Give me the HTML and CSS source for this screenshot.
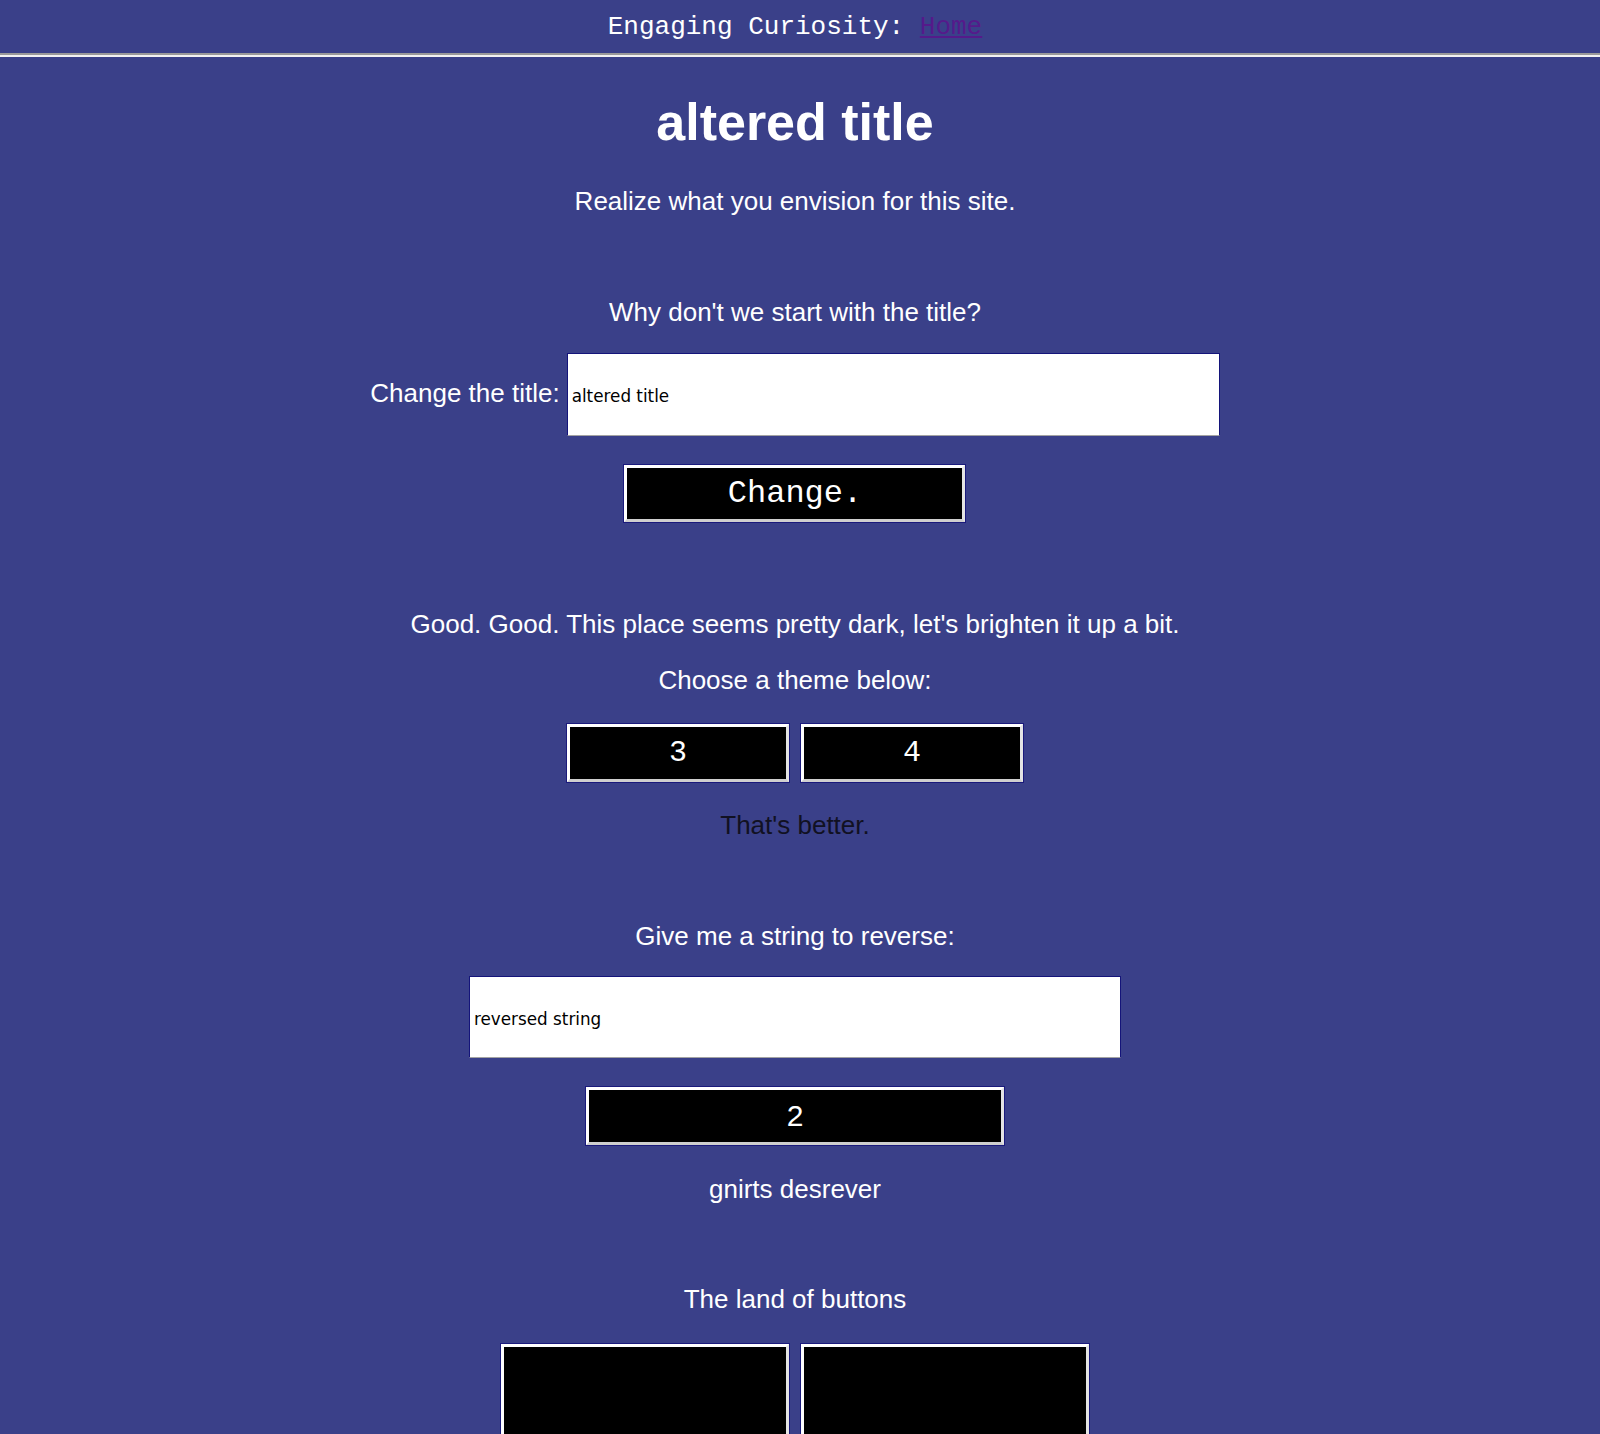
FILE: index.html
```html
<!DOCTYPE html>
<html lang="en">
<head>
<meta charset="utf-8">
<title>altered title</title>
<link rel="stylesheet" href="styles.css">
</head>
<body>
<header class="topbar">Engaging Curiosity: <a class="home-link" href="#">Home</a></header>
<main class="page">
  <h1 class="title">altered title</h1>
  <p class="lead">Realize what you envision for this site.</p>

  <section class="block block-title">
    <p class="line">Why don't we start with the title?</p>
    <div class="field-row">
      <label class="field-label" for="title-input">Change the title:</label>
      <input class="text-input" id="title-input" type="text" value="altered title">
    </div>
    <button class="btn btn-change" type="button">Change.</button>
  </section>

  <section class="block block-theme">
    <p class="line">Good. Good. This place seems pretty dark, let's brighten it up a bit.</p>
    <p class="line line-gap">Choose a theme below:</p>
    <div class="btn-row">
      <button class="btn btn-theme" type="button">3</button>
      <button class="btn btn-theme" type="button">4</button>
    </div>
    <p class="line line-dark">That's better.</p>
  </section>

  <section class="block block-reverse">
    <p class="line">Give me a string to reverse:</p>
    <input class="text-input text-input-reverse" type="text" value="reversed string">
    <button class="btn btn-reverse" type="button">2</button>
    <p class="line line-result">gnirts desrever</p>
  </section>

  <section class="block block-land">
    <p class="line">The land of buttons</p>
    <div class="btn-row btn-row-land">
      <button class="btn btn-land" type="button"></button>
      <button class="btn btn-land" type="button"></button>
    </div>
  </section>
</main>
</body>
</html>
```
FILE: styles.css
```css
html {
  background: #3a4089;
}

body {
  margin: 0;
  background: #3a4089;
  color: #ffffff;
  font-family: "Liberation Sans", Arial, sans-serif;
  font-size: 26px;
}

.topbar {
  height: 55px;
  line-height: 54px;
  padding-right: 10px;
  text-align: center;
  font-family: "Liberation Mono", "Courier New", monospace;
  font-size: 26px;
  color: #ffffff;
  border-bottom: 2px solid #f2f2f2;
  box-shadow: inset 0 -2px 0 #9a9a9a;
}

.home-link {
  color: #551a8b;
  text-decoration: underline;
}

.page {
  padding-right: 10px;
  display: flex;
  flex-direction: column;
  align-items: center;
  text-align: center;
}

.title {
  margin: 35px 0 34px;
  font-size: 52px;
  line-height: 60px;
  font-weight: bold;
}

.lead {
  margin: 0;
  line-height: 30px;
}

.block {
  display: flex;
  flex-direction: column;
  align-items: center;
}

.block-title { margin-top: 81px; }
.block-theme { margin-top: 87px; }
.block-reverse { margin-top: 81px; }
.block-land { margin-top: 80px; }

.line {
  margin: 0;
  line-height: 30px;
}

.line-gap { margin-top: 26px; }

.line-dark {
  margin-top: 28px;
  color: #111122;
}

.line-result { margin-top: 29px; }

.field-row {
  margin-top: 26px;
  display: flex;
  align-items: baseline;
  gap: 7px;
}

.field-label {
  line-height: 30px;
}

.text-input {
  box-sizing: border-box;
  width: 653px;
  height: 83px;
  margin: 0;
  padding: 3px 4px 0;
  background: #ffffff;
  color: #000000;
  font-family: "DejaVu Sans", "Lucida Grande", sans-serif;
  font-size: 16.8px;
  border-style: solid;
  border-width: 1px;
  border-color: #14147a #14147a #a3a3a3 #14147a;
  border-radius: 0;
  outline: none;
}

.text-input-reverse {
  margin-top: 25px;
  width: 652px;
  height: 82px;
}

.btn {
  box-sizing: border-box;
  margin: 0;
  padding: 0;
  background: #000000;
  color: #ffffff;
  border: 3px solid #ffffff;
  border-right-color: #e4e4e4;
  border-bottom-color: #cfcfcf;
  border-radius: 0;
  box-shadow: 0 0 0 1px #1a1a7c;
  cursor: pointer;
}

.btn-change {
  margin-top: 29px;
  width: 341px;
  height: 57px;
  font-family: "Liberation Mono", "Courier New", monospace;
  font-size: 32px;
}

.btn-row {
  margin-top: 29px;
  display: flex;
  gap: 12px;
}

.btn-theme {
  width: 222px;
  height: 58px;
  font-family: "Liberation Mono", "Courier New", monospace;
  font-size: 30px;
}

.btn-reverse {
  margin-top: 29px;
  width: 418px;
  height: 58px;
  font-family: "Liberation Sans", Arial, sans-serif;
  font-size: 30px;
}

.btn-row-land {
  margin-top: 30px;
}

.btn-land {
  width: 288px;
  height: 150px;
}
```
